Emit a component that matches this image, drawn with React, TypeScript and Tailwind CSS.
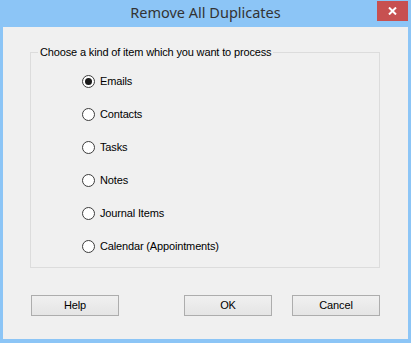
import { useState } from "react";

const items = ["Emails", "Contacts", "Tasks", "Notes", "Journal Items", "Calendar (Appointments)"];

function Radio({ label, checked, onSelect }: { label: string; checked: boolean; onSelect: () => void }) {
  return (
    <label className="flex h-[13px] cursor-default items-center" onClick={onSelect}>
      <span className="flex h-[13px] w-[13px] items-center justify-center rounded-full border border-[#3c3c3c] bg-white">
        {checked && <span className="h-[7px] w-[7px] rounded-full bg-[#1a1a1a]" />}
      </span>
      <span className="ml-[5px] leading-[13px]">{label}</span>
    </label>
  );
}

function DialogButton({ children }: { children: React.ReactNode }) {
  return (
    <button
      type="button"
      className="h-[21px] w-[88px] border border-[#adadad] bg-gradient-to-b from-[#f0f0f0] to-[#e5e5e5] text-[11px] leading-none text-black"
    >
      {children}
    </button>
  );
}

export default function App() {
  const [selected, setSelected] = useState(0);

  return (
    <div
      className="flex h-[343px] w-[411px] flex-col bg-[#8cc5f6] text-[11px] tracking-[-0.15px] text-black"
      style={{ fontFamily: '"Liberation Sans", Arial, sans-serif' }}
    >
      {/* Title bar */}
      <div className="relative flex h-[27px] shrink-0 items-center justify-center">
        <span
          className="pb-[2px] text-[14.5px] tracking-normal text-[#333]"
          style={{ fontFamily: '"Noto Sans", "Open Sans", sans-serif' }}
        >
          Remove All Duplicates
        </span>
        <div className="absolute right-[3px] top-[1px] flex h-[20px] w-[31px] items-center justify-center bg-[#c75050]">
          <svg width="9" height="8" viewBox="0 0 9 8">
            <path d="M1 0.5 L8 7.5 M8 0.5 L1 7.5" stroke="white" strokeWidth="2" />
          </svg>
        </div>
      </div>

      {/* Client area */}
      <div className="mx-[3px] mb-[4px] flex flex-1 flex-col bg-[#f0f0f0] pt-[19px]">
        <fieldset className="ml-[27px] h-[222px] w-[350px] border border-[#dcdcdc] pl-[7px]">
          <legend className="px-[2px] leading-[13px]">Choose a kind of item which you want to process</legend>
          <div className="ml-[44px] mt-[16px] flex flex-col gap-[20px]">
            {items.map((item, i) => (
              <Radio key={item} label={item} checked={selected === i} onSelect={() => setSelected(i)} />
            ))}
          </div>
        </fieldset>

        <div className="mt-[27px] flex pl-[28px]">
          <DialogButton>Help</DialogButton>
          <div className="ml-[65px] flex gap-[20px]">
            <DialogButton>OK</DialogButton>
            <DialogButton>Cancel</DialogButton>
          </div>
        </div>
      </div>
    </div>
  );
}
